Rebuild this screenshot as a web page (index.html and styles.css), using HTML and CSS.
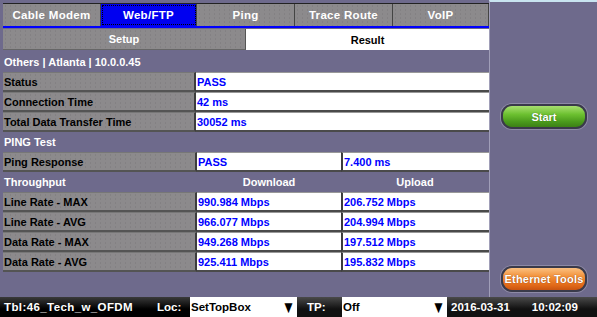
FILE: index.html
```html
<!DOCTYPE html>
<html lang="en">

<head>
    <meta charset="UTF-8">
    <title>Web/FTP Result</title>
    <link rel="stylesheet" href="styles.css">
</head>

<body>
    <div class="screen">
        <div class="main">
            <div class="tabs">
                <div class="tab">Cable Modem</div>
                <div class="tab active">Web/FTP</div>
                <div class="tab">Ping</div>
                <div class="tab">Trace Route</div>
                <div class="tab">VoIP</div>
            </div>
            <div class="subtabs">
                <div class="subtab">Setup</div>
                <div class="subtab selected">Result</div>
            </div>

            <div class="section first">Others | Atlanta | 10.0.0.45</div>
            <div class="row">
                <div class="label">Status</div>
                <div class="value">PASS</div>
            </div>
            <div class="row">
                <div class="label">Connection Time</div>
                <div class="value">42 ms</div>
            </div>
            <div class="row">
                <div class="label">Total Data Transfer Time</div>
                <div class="value">30052 ms</div>
            </div>

            <div class="section">PING Test</div>
            <div class="row split">
                <div class="label">Ping Response</div>
                <div class="value">PASS</div>
                <div class="value">7.400 ms</div>
            </div>

            <div class="section split">
                <div>Throughput</div>
                <div class="col-head">Download</div>
                <div class="col-head">Upload</div>
            </div>
            <div class="row split">
                <div class="label">Line Rate - MAX</div>
                <div class="value">990.984 Mbps</div>
                <div class="value">206.752 Mbps</div>
            </div>
            <div class="row split">
                <div class="label">Line Rate - AVG</div>
                <div class="value">966.077 Mbps</div>
                <div class="value">204.994 Mbps</div>
            </div>
            <div class="row split">
                <div class="label">Data Rate - MAX</div>
                <div class="value">949.268 Mbps</div>
                <div class="value">197.512 Mbps</div>
            </div>
            <div class="row split">
                <div class="label">Data Rate - AVG</div>
                <div class="value">925.411 Mbps</div>
                <div class="value">195.832 Mbps</div>
            </div>
        </div>

        <div class="side">
            <div class="btn start">Start</div>
            <div class="btn tools">Ethernet Tools</div>
        </div>

        <div class="statusbar">
            <div class="sb-text tbl">Tbl:46_Tech_w_OFDM</div>
            <div class="sb-text loc">Loc:</div>
            <div class="sb-field loc-field">SetTopBox<span class="arrow">&#9660;</span></div>
            <div class="sb-tag">TP:</div>
            <div class="sb-field tp-field">Off<span class="arrow">&#9660;</span></div>
            <div class="sb-date">
                <span>2016-03-31</span>
                <span>10:02:09</span>
            </div>
        </div>
    </div>
</body>

</html>
```

FILE: styles.css
```css
body {
    margin: 0;
    background: #6e6a8c;
    font-family: 'Liberation Sans', Arial, sans-serif;
    font-size: 11px;
    font-weight: bold;
}

.screen {
    width: 597px;
    height: 317px;
    display: grid;
    grid-template-columns: 489px 108px;
    grid-template-rows: 297px 20px;
    overflow: hidden;
}

.main {
    padding: 3px 0 0 3px;
}

/* top tabs */
.tabs {
    display: grid;
    grid-template-columns: 98px 96px 98px 98px 96px;
    height: 22px;
    border-top: 1px solid #222;
    border-bottom: 2px solid #0000ff;
}

.tab {
    background: #8c8a8c radial-gradient(#828082 0.6px, transparent 0.8px) 0 0 / 5px 4px;
    color: #fff;
    font-size: 11.5px;
    letter-spacing: 0.3px;
    display: flex;
    align-items: center;
    justify-content: center;
    border-right: 1px solid #444;
}

.tab.active {
    background: #0000f0;
    outline: 1px dotted #000;
    outline-offset: -2px;
}

/* setup / result */
.subtabs {
    display: grid;
    grid-template-columns: 243px 1fr;
    height: 21px;
    margin-top: 1px;
}

.subtab {
    background: #8c8a8c radial-gradient(#828082 0.6px, transparent 0.8px) 0 0 / 5px 4px;
    color: #fff;
    display: flex;
    align-items: center;
    justify-content: center;
    border-right: 1px solid #555;
    border-bottom: 1px solid #666;
}

.subtab.selected {
    background: #fff;
    color: #000;
    border: 0;
}

/* table */
.section {
    height: 20px;
    color: #fff;
    display: flex;
    align-items: center;
    padding-left: 1px;
}

.section.first {
    margin-top: 1px;
    height: 21px;
}

.row {
    height: 20px;
    display: grid;
    grid-template-columns: 193px 1fr;
}

.split {
    display: grid;
    grid-template-columns: 194px 144px 1fr;
    padding-left: 0;
}

.section.split > div:first-child {
    padding-left: 1px;
}

.col-head {
    text-align: center;
}

.label {
    background: #8c8a8c radial-gradient(#828082 0.6px, transparent 0.8px) 0 0 / 5px 4px;
    color: #000;
    padding-left: 1px;
    display: flex;
    align-items: center;
    border-right: 2px solid #3c3c3c;
    border-bottom: 2px solid #545454;
    border-top: 1px solid #777;
}

.value {
    background: #fff;
    color: #0000ff;
    display: flex;
    align-items: center;
    padding-left: 1px;
    border-bottom: 2px solid #4a4a4a;
    border-top: 1px solid #999;
}

.split .value + .value {
    border-left: 2px solid #3c3c3c;
}

/* right panel */
.side {
    border-left: 1px solid #a09eb8;
    border-top: 2px solid #c8e4f0;
    position: relative;
}

.btn {
    position: absolute;
    left: 11px;
    width: 82px;
    height: 21px;
    border-radius: 11px;
    color: #fff;
    display: flex;
    align-items: center;
    justify-content: center;
    border: 2px solid #3a3a4a;
    box-shadow: 0 0 0 1px #8e8aa6;
}

.start {
    top: 102px;
    background: linear-gradient(#a8e070 0%, #6cc030 40%, #4a9a1c 75%, #3c8016 100%);
    text-shadow: 0 0 1px #2a5a10;
}

.tools {
    top: 264px;
    height: 22px;
    background: linear-gradient(#fbc080 0%, #f08a30 45%, #e06818 80%, #c85410 100%);
    text-shadow: 0 0 1px #803000;
    letter-spacing: 0.2px;
}

/* status bar */
.statusbar {
    grid-column: 1 / 3;
    display: flex;
    align-items: center;
    background: linear-gradient(#3a3a3a, #000 60%);
    color: #fff;
    font-size: 11.5px;
}

.sb-text {
    height: 100%;
    display: flex;
    align-items: center;
}

.tbl {
    width: 153px;
    padding-left: 4px;
    letter-spacing: 0.4px;
}

.loc {
    width: 33px;
}

.sb-field {
    height: 100%;
    background: #fff;
    color: #000;
    display: flex;
    align-items: center;
    justify-content: space-between;
    padding-left: 1px;
}

.loc-field {
    width: 106px;
}

.tp-field {
    width: 104px;
}

.arrow {
    font-size: 17px;
    line-height: 1;
    transform: scaleX(0.8);
}

.sb-tag {
    width: 35px;
    height: 100%;
    display: flex;
    align-items: center;
    padding-left: 10px;
    background: linear-gradient(#4a4a4a, #111 60%);
}

.sb-date {
    flex: 1;
    height: 100%;
    display: flex;
    align-items: center;
    gap: 22px;
    padding-left: 4px;
    background: linear-gradient(#4a4a4a, #111 60%);
}
```
